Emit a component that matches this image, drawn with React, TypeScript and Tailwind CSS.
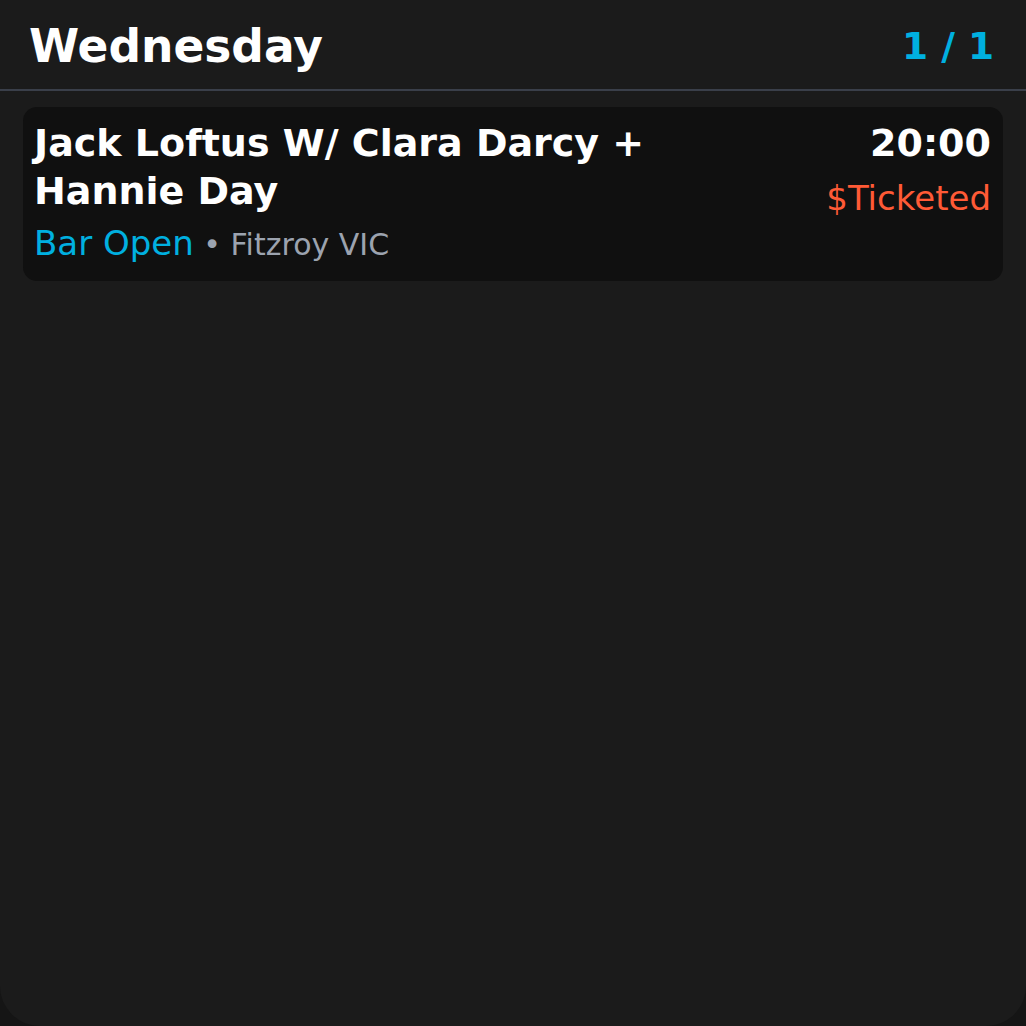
export default function App() {
  return (
    <div className="w-[1026px] h-[1026px] bg-[#151515]" style={{ fontFamily: '"DejaVu Sans", sans-serif' }}>
      <div className="w-full h-full bg-[#1b1b1b] rounded-b-[40px] flex flex-col overflow-hidden">
        <div className="flex items-center justify-between pl-[29px] pr-[32px] pt-[4px] h-[91px] border-b-2 border-[#3a3f4a]">
          <div className="text-white font-bold text-[45.5px] leading-none">Wednesday</div>
          <div className="text-[#00b0e0] font-bold text-[37.5px] leading-none">1 / 1</div>
        </div>
        <div className="px-[23px] pt-[16px]">
          <div className="bg-[#101010] rounded-[14px] pl-[11px] pr-[12px] pt-[12px] pb-[9px] flex justify-between">
            <div className="flex flex-col">
              <div className="text-white font-bold text-[38px] leading-[48px] w-[660px]">Jack Loftus W/ Clara Darcy + Hannie Day</div>
              <div className="mt-[6px] leading-[44px]">
                <span className="text-[#00b0e0] text-[34px]">Bar Open</span>
                <span className="text-[#9ca3af] text-[30px]"> • Fitzroy VIC</span>
              </div>
            </div>
            <div className="flex flex-col items-end">
              <div className="text-white font-bold text-[38px] leading-[48px]">20:00</div>
              <div className="text-[#ff5a36] text-[34px] leading-[44px] mt-[9px]">$Ticketed</div>
            </div>
          </div>
        </div>
      </div>
    </div>
  );
}
